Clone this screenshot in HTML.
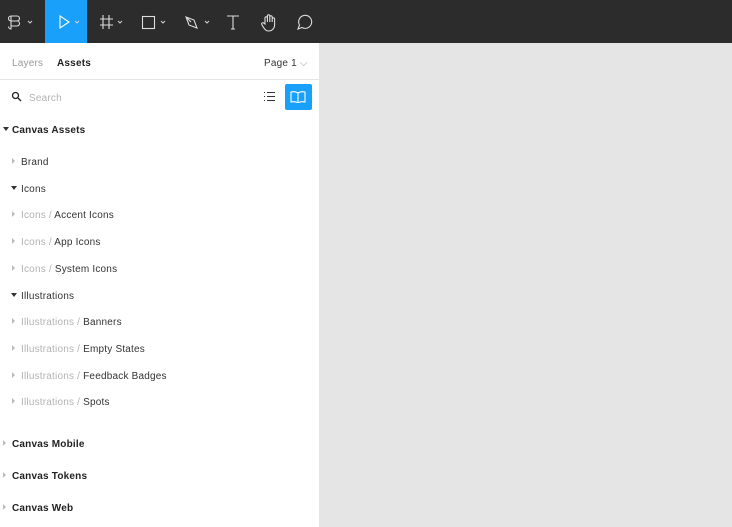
<!DOCTYPE html><html><head><style>
*{margin:0;padding:0;box-sizing:border-box}
body{width:732px;height:527px;overflow:hidden;background:#e5e5e5;font-family:"Liberation Sans",sans-serif;position:relative}
.tb{position:absolute;left:0;top:0;width:732px;height:43px;background:#2c2c2c}
.sel{position:absolute;left:45px;top:0;width:42px;height:43px;background:#18a0fb}
.panel{position:absolute;left:0;top:43px;width:320px;height:484px;background:#fff;border-right:1px solid #e5e5e5}
.t{position:absolute;font-size:10px;color:#333;white-space:nowrap;line-height:12px;letter-spacing:0.2px;margin-top:2px}
.g{color:#b3b3b3}
.b{font-weight:bold;color:#222;font-size:10px}
.ar{position:absolute;width:0;height:0}
.r{border-top:3px solid transparent;border-bottom:3px solid transparent;border-left:3px solid #bbb}
.d{border-left:3px solid transparent;border-right:3px solid transparent;border-top:4px solid #333}
svg{position:absolute}
</style></head><body>
<div class="tb"></div><div class="sel"></div>
<svg width="732" height="43" style="left:0;top:0" fill="none" stroke="#fff" stroke-width="1.1">
<g stroke="#ddd"><path d="M11 16h6a2.5 2.5 0 0 1 0 5h-6zM11 21h6a2.5 2.5 0 0 1 0 5h-6zM11 16v13a2.5 2.5 0 0 1-2.5-2.5M11 16a2.5 2.5 0 0 0 0 5"/></g>
<path d="M28 21l2 2 2-2M75 21l2 2 2-2M118 21l2 2 2-2M161 21l2 2 2-2M205 21l2 2 2-2" stroke="#ccc"/>
<path d="M60 16l9 6-9 6z" stroke="#fff"/>
<path d="M103 15v14M109 15v14M100 19h13M100 25h13" stroke="#ddd"/>
<rect x="142.5" y="16.5" width="12" height="12" stroke="#ddd"/>
<path d="M186 17l8 3 3 8-8-3zM186 17l5 5" stroke="#ddd"/>
<path d="M227 16h12M233 16v13M231 29h4" stroke="#ddd"/>
<path d="M265 24v-6a1.2 1.2 0 0 1 2.4 0v4-6a1.2 1.2 0 0 1 2.4 0v6-5a1.2 1.2 0 0 1 2.4 0v5-3a1.2 1.2 0 0 1 2.4 0v6a6 6 0 0 1-6 6c-3 0-4-2-6-5l-1-2a1.2 1.2 0 0 1 2-1z" stroke="#ddd"/>
<path d="M298 29l1.5-4a6.5 6.5 0 1 1 2.5 2.5z" stroke="#ddd"/>
</svg>
<div class="panel">
<div style="position:absolute;left:0;top:36px;width:320px;height:1px;background:#e5e5e5"></div>
</div>
<div class="t g" style="left:12px;top:56px;color:#999">Layers</div>
<div class="t b" style="left:57px;top:56px">Assets</div>
<div class="t" style="left:264px;top:56px">Page 1 <span style="color:#999">⌵</span></div>
<svg width="12" height="12" style="left:11px;top:91px" fill="none" stroke="#222" stroke-width="1.3"><circle cx="4.5" cy="4.5" r="3"/><path d="M7 7l3 3"/></svg>
<div class="t" style="left:29px;top:91px;color:#b3b3b3">Search</div>
<svg width="14" height="14" style="left:263px;top:90px" stroke="#333" stroke-width="1"><path d="M1 2.5h1M4 2.5h8M1 6.5h1M4 6.5h8M1 10.5h1M4 10.5h8"/></svg>
<div style="position:absolute;left:285px;top:84px;width:27px;height:26px;background:#18a0fb;border-radius:2px"></div>
<svg width="16" height="12" style="left:290px;top:91px" fill="none" stroke="#fff" stroke-width="1.1"><path d="M8 2c-2-1.5-5-1.5-7-1v10c2-.5 5-.5 7 1 2-1.5 5-1.5 7-1V1c-2-.5-5-.5-7 1zM8 2v10"/></svg>
<div class="ar d" style="left:3px;top:127px"></div><div class="t b" style="left:12px;top:123px">Canvas Assets</div>
<div class="ar r" style="left:12px;top:158px"></div><div class="t" style="left:21px;top:155px">Brand</div>
<div class="ar d" style="left:11px;top:186px"></div><div class="t" style="left:21px;top:182px">Icons</div>
<div class="ar r" style="left:12px;top:211px"></div><div class="t" style="left:21px;top:208px"><span class="g">Icons / </span>Accent Icons</div>
<div class="ar r" style="left:12px;top:238px"></div><div class="t" style="left:21px;top:235px"><span class="g">Icons / </span>App Icons</div>
<div class="ar r" style="left:12px;top:265px"></div><div class="t" style="left:21px;top:262px"><span class="g">Icons / </span>System Icons</div>
<div class="ar d" style="left:11px;top:293px"></div><div class="t" style="left:21px;top:289px">Illustrations</div>
<div class="ar r" style="left:12px;top:318px"></div><div class="t" style="left:21px;top:315px"><span class="g">Illustrations / </span>Banners</div>
<div class="ar r" style="left:12px;top:345px"></div><div class="t" style="left:21px;top:342px"><span class="g">Illustrations / </span>Empty States</div>
<div class="ar r" style="left:12px;top:372px"></div><div class="t" style="left:21px;top:369px"><span class="g">Illustrations / </span>Feedback Badges</div>
<div class="ar r" style="left:12px;top:398px"></div><div class="t" style="left:21px;top:395px"><span class="g">Illustrations / </span>Spots</div>
<div class="ar r" style="left:3px;top:440px"></div><div class="t b" style="left:12px;top:437px">Canvas Mobile</div>
<div class="ar r" style="left:3px;top:472px"></div><div class="t b" style="left:12px;top:469px">Canvas Tokens</div>
<div class="ar r" style="left:3px;top:504px"></div><div class="t b" style="left:12px;top:501px">Canvas Web</div>
</body></html>
